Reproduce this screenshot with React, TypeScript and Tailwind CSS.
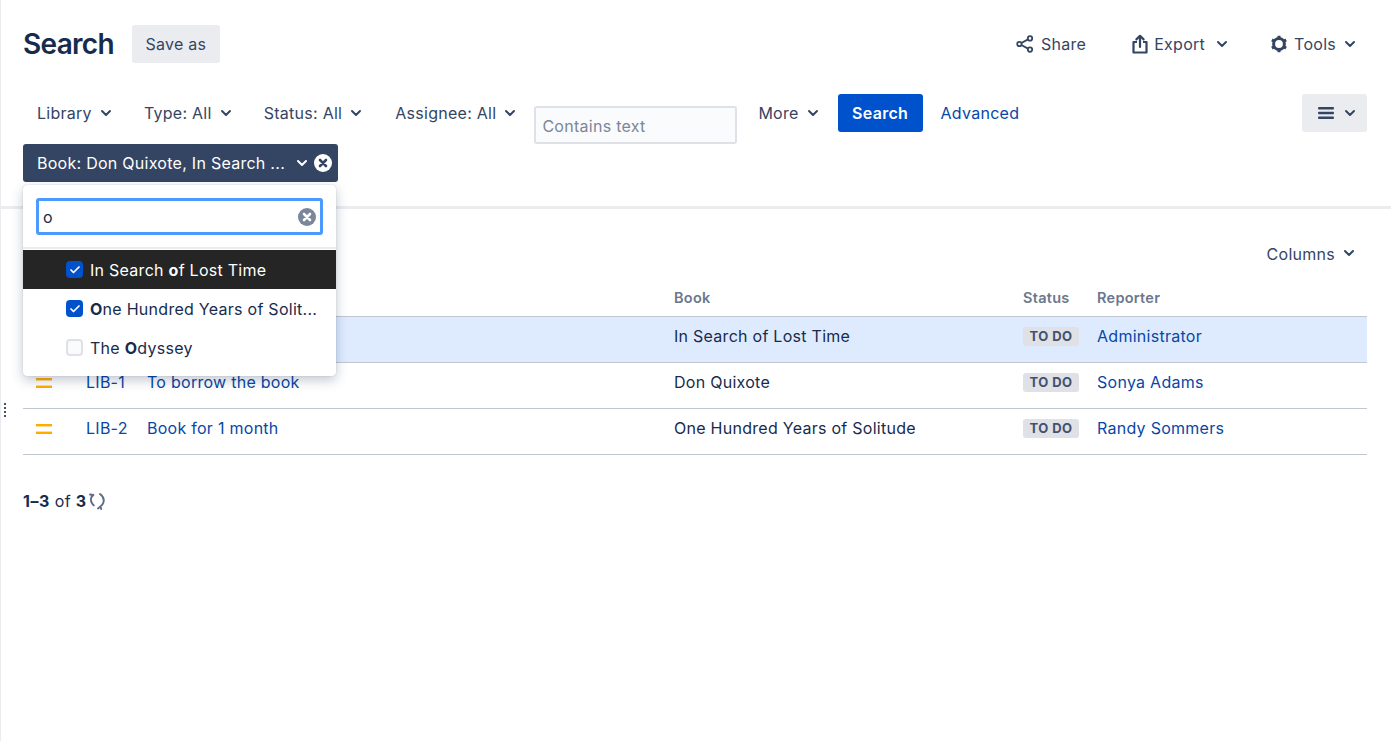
import React from 'react';
import { ChevronDown, Check } from 'lucide-react';

const Caret = ({ className = 'text-[#344563]' }: { className?: string }) => (
  <ChevronDown className={`h-4 w-4 ${className}`} strokeWidth={3} />
);

const ClearIcon = ({ bg, fg, size = 'h-[18px] w-[18px]' }: { bg: string; fg: string; size?: string }) => (
  <svg viewBox="0 0 18 18" className={size}>
    <circle cx="9" cy="9" r="9" fill={bg} />
    <path d="M6 6l6 6M12 6l-6 6" stroke={fg} strokeWidth="2.6" strokeLinecap="round" />
  </svg>
);

const ShareIcon = () => (
  <svg viewBox="0 0 18 18" className="h-[18px] w-[18px]" fill="none" stroke="#344563" strokeWidth="1.8">
    <circle cx="3.4" cy="9" r="2.2" />
    <circle cx="14" cy="3.4" r="2.2" />
    <circle cx="14" cy="14.6" r="2.2" />
    <path d="M5.4 8l6.6-3.6M5.4 10l6.6 3.6" />
  </svg>
);

const ExportIcon = () => (
  <svg viewBox="0 0 18 20" className="h-5 w-[18px]" fill="none" stroke="#344563" strokeWidth="2.2">
    <path d="M9 13V2M5.4 5.400L9 1.800l3.600 3.600" strokeLinecap="round" strokeLinejoin="round" />
    <path d="M6 8H2.500v10.500h13V8H12" strokeLinejoin="round" />
  </svg>
);

const GearIcon = () => (
  <svg viewBox="0 0 18 18" className="h-[18px] w-[18px]" fill="none" stroke="#344563">
    <circle cx="9" cy="9" r="5.400" strokeWidth="3" />
    <path d="M9 .8v2.600M9 14.600v2.600M1.900 4.900l2.300 1.300M13.800 11.800l2.300 1.300M1.900 13.100l2.300-1.300M13.800 6.200l2.300-1.300" strokeWidth="3" />
  </svg>
);

const FilterButton = ({ label, className = '' }: { label: string; className?: string }) => (
  <button className={`flex h-[38px] items-center gap-1.5 whitespace-nowrap rounded-[3px] px-3.5 text-[#344563] ${className}`}>
    {label}
    <Caret />
  </button>
);

const rows = [
  { id: 3, key: '', summary: '', book: 'In Search of Lost Time', reporter: 'Administrator', selected: true },
  { id: 1, key: 'LIB-1', summary: 'To borrow the book', book: 'Don Quixote', reporter: 'Sonya Adams', selected: false },
  { id: 2, key: 'LIB-2', summary: 'Book for 1 month', book: 'One Hundred Years of Solitude', reporter: 'Randy Sommers', selected: false },
];

const Checkbox = ({ checked }: { checked: boolean }) =>
  checked ? (
    <span className="flex h-[17px] w-[17px] items-center justify-center rounded-[4px] bg-[#0052cc]">
      <Check className="h-3 w-3 text-white" strokeWidth={3.5} />
    </span>
  ) : (
    <span className="h-[17px] w-[17px] rounded-[4px] border-2 border-[#dfe1e6] bg-[#fafbfc]" />
  );

const options = [
  { id: 1, checked: true, active: true, text: <>In Search <b>o</b>f Lost Time</> },
  { id: 2, checked: true, active: false, text: <><b>O</b>ne Hundred Years of Solit...</> },
  { id: 3, checked: false, active: false, text: <>The <b>O</b>dyssey</> },
];

export default function App() {
  return (
    <div className="relative min-h-[741px] border-l border-[#ebecf0] bg-white font-['Inter',sans-serif] text-[16px] tracking-[0.27px] text-[#172b4d]">
      {/* header */}
      <div className="flex h-[94px] items-start justify-between pl-[22px] pr-6 pt-[25px]">
        <div className="flex items-center gap-[18px]">
          <h1 className="text-[28px] font-semibold leading-[38px] tracking-[-0.7px] text-[#172b4d]">Search</h1>
          <button className="flex h-[38px] w-[88px] items-center justify-center rounded-[3px] bg-[#ebecf0] text-[#344563]">Save as</button>
        </div>
        <div className="flex h-[38px] items-center gap-[3px] text-[#344563]">
          <button className="flex items-center gap-[7px] pl-5 pr-[22px]"><ShareIcon />Share</button>
          <button className="flex items-center gap-[5px] pl-5 pr-[18px]"><ExportIcon />Export<Caret className="ml-1 text-[#344563]" /></button>
          <button className="flex items-center gap-1.5 pl-[19px] pr-[9px]"><GearIcon />Tools<Caret /></button>
        </div>
      </div>

      {/* filters */}
      <div className="flex items-start justify-between pl-[22px] pr-6">
        <div className="flex items-start gap-[2px]">
          <FilterButton label="Library" />
          <FilterButton label="Type: All" />
          <FilterButton label="Status: All" />
          <FilterButton label="Assignee: All" className="ml-[1px]" />
          <input
            readOnly
            placeholder="Contains text"
            className="mt-3 mr-[5px] h-[38px] w-[203px] rounded-[3px] border-2 border-[#dfe1e6] bg-[#fafbfc] px-1.5 pt-[1px] text-[16px] outline-none placeholder:text-[#7a869a]"
          />
          <FilterButton label="More" />
          <button className="ml-[1px] h-[38px] rounded-[3px] bg-[#0052cc] px-[14.5px] font-semibold text-white">Search</button>
          <a className="flex h-[38px] items-center pl-[16px] text-[#0747a6]">Advanced</a>
        </div>
        <button className="flex h-[38px] w-[65px] items-center justify-center gap-2 rounded-[3px] bg-[#ebecf0] pl-[6px]">
          <svg viewBox="0 0 16 14" className="h-[14px] w-4" fill="#344563">
            <rect y="1" width="16" height="2.4" rx="1" />
            <rect y="5.8" width="16" height="2.4" rx="1" />
            <rect y="10.6" width="16" height="2.4" rx="1" />
          </svg>
          <Caret />
        </button>
      </div>

      <div className="pl-[22px]">
        <button className="flex h-[38px] w-[315px] items-center rounded-[3px] bg-[#344563] pl-3.5 pr-1.5 text-white">
          <span className="flex-1 whitespace-nowrap text-left">Book: Don Quixote, In Search ...</span>
          <Caret className="text-white" />
          <span className="ml-1"><ClearIcon bg="#ffffff" fg="#344563" /></span>
        </button>
      </div>

      {/* dropdown */}
      <div className="absolute left-[22px] top-[185px] z-10 w-[313px] rounded-[4px] bg-white pb-[9px] shadow-[0_4px_12px_rgba(9,30,66,0.25),0_0_1px_rgba(9,30,66,0.31)]">
        <div className="border-b-2 border-[#ebecf0] px-[13px] pb-3 pt-[13px]">
          <div className="flex h-[37px] items-center justify-between rounded-[3px] border-[3px] border-[#4c9aff] pl-[4px] pr-[4px]">
            <span>o</span>
            <ClearIcon bg="#7a869a" fg="#ffffff" />
          </div>
        </div>
        <div className="pt-[1px]">
          {options.map(o => (
            <div
              key={o.id}
              className={`flex h-[39px] items-center gap-[7px] pl-[43px] whitespace-nowrap ${o.active ? 'bg-[#252525] text-white' : 'text-[#172b4d]'}`}
            >
              <Checkbox checked={o.checked} />
              <span>{o.text}</span>
            </div>
          ))}
        </div>
      </div>

      {/* grip */}
      <div className="absolute left-[3px] top-[403px] flex flex-col gap-[2px]">
        {[0, 1, 2, 3].map(i => (
          <span key={i} className="h-[2px] w-[2px] bg-[#42526e]" />
        ))}
      </div>

      <div className="mt-[24px] border-t-[3px] border-[#ebecf0] pl-[22px] pr-6">
        <div className="flex h-[73px] items-start justify-end pt-[27px]">
          <button className="flex h-[38px] items-start gap-1.5 px-2.5 pt-[6px] text-[#344563]">
            Columns
            <span className="pt-[3px]"><Caret /></span>
          </button>
        </div>
        <table className="w-full table-fixed border-collapse">
          <colgroup>
            <col className="w-[63px]" />
            <col className="w-[61px]" />
            <col className="w-[527px]" />
            <col className="w-[349px]" />
            <col className="w-[74px]" />
            <col />
          </colgroup>
          <thead>
            <tr className="h-[34px] border-b border-[#c1c7d0] text-left text-[14.5px] text-[#6b778c]">
              <th />
              <th />
              <th />
              <th className="align-top pt-[5px] font-semibold">Book</th>
              <th className="align-top pt-[5px] font-semibold">Status</th>
              <th className="align-top pt-[5px] font-semibold">Reporter</th>
            </tr>
          </thead>
          <tbody>
            {rows.map(r => (
              <tr key={r.id} className={`h-[46px] border-b border-[#c1c7d0] ${r.selected ? 'bg-[#deebff]' : ''}`}>
                <td className="pl-[13px] align-top pt-[14px]">
                  <svg viewBox="0 0 16 12" className="h-3 w-4" fill="#ffab00">
                    <rect y="1" width="16" height="2.4" />
                    <rect y="8.600" width="16" height="2.4" />
                  </svg>
                </td>
                <td className="align-top pt-[7px] text-[#0747a6]">{r.key}</td>
                <td className="align-top pt-[7px] text-[#0747a6]">{r.summary}</td>
                <td className="align-top pt-[7px]">{r.book}</td>
                <td className="align-top pt-[6px]">
                  <span className="inline-flex h-[19px] w-[56px] items-center justify-center rounded-[3px] bg-[#dfe1e6] text-[13px] font-bold tracking-[0.4px] text-[#42526e]">TO DO</span>
                </td>
                <td className="align-top pt-[7px] text-[#0747a6]">{r.reporter}</td>
              </tr>
            ))}
          </tbody>
        </table>
        <div className="flex items-center pt-[34px]">
          <span><b className="font-bold tracking-[0.6px]">1–3</b> of <b className="font-bold">3</b></span>
          <svg viewBox="0 0 20 18" className="ml-[1px] h-[20px] w-[20px]" fill="none" stroke="#5e6c84" strokeWidth="1.9" strokeLinecap="round" strokeLinejoin="round">
            <path d="M6 3.400c-2.400 1.600-3 5.600-.6 8.400l1.400 1.600M3 2.500l3.400.5" />
            <path d="M13 2c2.600 1.800 4.400 5 3.400 8.400-.5 1.800-1.600 3.200-3 4.200M11 16.400l2.400-1.800.8 2.400" />
          </svg>
        </div>
      </div>
    </div>
  );
}
